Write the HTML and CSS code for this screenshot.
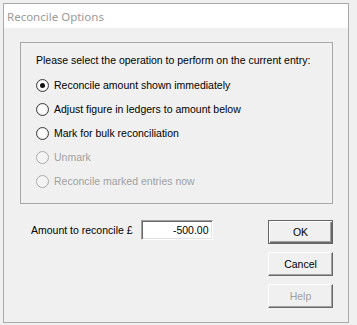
FILE: index.html
```html
<!DOCTYPE html>
<html lang="en">
<head>
    <meta charset="UTF-8">
    <title>Reconcile Options</title>
    <link rel="stylesheet" href="styles.css">
</head>
<body>
    <div class="window">
        <div class="titlebar">Reconcile Options</div>
        <div class="content">
            <div class="group">
                <div class="prompt">Please select the operation to perform on the current entry:</div>
                <label class="option"><span class="radio checked"></span>Reconcile amount shown immediately</label>
                <label class="option"><span class="radio"></span>Adjust figure in ledgers to amount below</label>
                <label class="option"><span class="radio"></span>Mark for bulk reconciliation</label>
                <label class="option disabled"><span class="radio"></span>Unmark</label>
                <label class="option disabled"><span class="radio"></span>Reconcile marked entries now</label>
            </div>
            <div class="bottom">
                <div class="amount">
                    <span class="amount-label">Amount to reconcile &pound;</span>
                    <div class="field">-500.00</div>
                </div>
                <div class="buttons">
                    <button class="btn default">OK</button>
                    <button class="btn">Cancel</button>
                    <button class="btn disabled">Help</button>
                </div>
            </div>
        </div>
    </div>
</body>
</html>
```

FILE: styles.css
```css
body { margin: 0; background: #f0f0f0; font-family: "Liberation Sans", Arial, sans-serif; font-size: 10.5px; color: #000; }
.window { margin: 3px 0 0 3px; width: 346px; height: 320px; box-sizing: border-box; border: 1px solid #aaaaaa; background: #f0f0f0; }
.titlebar { height: 24px; background: #fff; padding-left: 3px; display: flex; align-items: center; font-family: "Noto Sans", sans-serif; font-size: 11.5px; color: #9a9a9a; }
.content { padding: 14px 15px 0 16px; }
.group { height: 162px; box-sizing: border-box; border: 1px solid #a8a8a8; padding: 11px 0 0 15px; }
.prompt { height: 13px; line-height: 13px; margin-bottom: 6px; }
.option { display: flex; align-items: center; height: 24px; }
.radio { width: 11px; height: 11px; border: 1px solid #3c3c3c; border-radius: 50%; background: #fff; margin-right: 5px; display: flex; align-items: center; justify-content: center; box-shadow: inset 0 0 0 1px #e6e6e6; }
.radio.checked::after { content: ""; width: 5px; height: 5px; border-radius: 50%; background: #111; }
.option.disabled { color: #a0a0a0; }
.option.disabled .radio { border-color: #ababab; background: #f4f4f4; box-shadow: none; }
.bottom { display: flex; justify-content: space-between; padding-top: 16px; }
.amount { display: flex; align-items: center; height: 20px; padding-left: 11px; }
.amount-label { margin-right: 8px; }
.field { width: 72px; height: 20px; box-sizing: border-box; background: #fff; border: 1px solid; border-color: #a0a0a0 #fff #fff #a0a0a0; box-shadow: inset 1px 1px #696969, inset -1px -1px #e3e3e3; text-align: right; padding-right: 3px; line-height: 18px; }
.buttons { display: flex; flex-direction: column; gap: 8px; }
.btn { width: 65px; height: 24px; font: inherit; color: #000; background: #f0f0f0; padding: 0; border: 1px solid; border-color: #fff #696969 #696969 #fff; box-shadow: inset -1px -1px #a0a0a0; }
.btn.default { border-color: #646464; box-shadow: inset 1px 1px #fff, inset -1px -1px #696969, inset -2px -2px #a0a0a0; }
.btn.disabled { color: #a0a0a0; }
```
